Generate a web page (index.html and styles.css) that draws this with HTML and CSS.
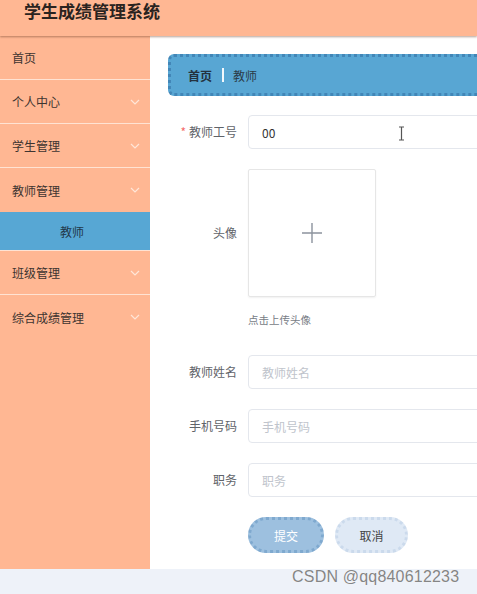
FILE: index.html
```html
<!DOCTYPE html>
<html lang="zh-CN">
<head>
<meta charset="utf-8">
<title>学生成绩管理系统</title>
<link rel="stylesheet" href="styles.css">
</head>
<body>
<div class="app">
  <header class="topbar"><h1 class="title">学生成绩管理系统</h1></header>
  <div class="layout">
    <aside class="sidebar">
      <div class="menu-item">首页</div>
      <div class="menu-item">个人中心<svg class="chev" width="10" height="6" viewBox="0 0 10 6"><polyline points="1,1 5,5 9,1" fill="none" stroke="#ffe6d8" stroke-width="1.2"/></svg></div>
      <div class="menu-item">学生管理<svg class="chev" width="10" height="6" viewBox="0 0 10 6"><polyline points="1,1 5,5 9,1" fill="none" stroke="#ffe6d8" stroke-width="1.2"/></svg></div>
      <div class="menu-group">
        <div class="menu-title">教师管理<svg class="chev" width="10" height="6" viewBox="0 0 10 6"><polyline points="1,1 5,5 9,1" fill="none" stroke="#ffe6d8" stroke-width="1.2"/></svg></div>
        <div class="menu-sub">教师</div>
      </div>
      <div class="menu-item">班级管理<svg class="chev" width="10" height="6" viewBox="0 0 10 6"><polyline points="1,1 5,5 9,1" fill="none" stroke="#ffe6d8" stroke-width="1.2"/></svg></div>
      <div class="menu-item last">综合成绩管理<svg class="chev" width="10" height="6" viewBox="0 0 10 6"><polyline points="1,1 5,5 9,1" fill="none" stroke="#ffe6d8" stroke-width="1.2"/></svg></div>
    </aside>
    <main class="main">
      <div class="breadcrumb">
        <span class="crumb-home">首页</span>
        <span class="crumb-sep"></span>
        <span class="crumb-cur">教师</span>
      </div>
      <form class="form">
        <div class="row first">
          <label class="label"><span class="req">*</span>教师工号</label>
          <div class="control">
            <input class="input" type="text" value="00">
            <svg class="ibeam" width="7" height="15" viewBox="0 0 7 15"><path d="M1 1h5M3.5 1v13M1 14h5" fill="none" stroke="#555" stroke-width="1.2"/></svg>
          </div>
        </div>
        <div class="row avatar-row">
          <label class="label tall">头像</label>
          <div class="upload-col">
            <div class="uploader">
              <svg width="22" height="22" viewBox="0 0 22 22"><path d="M11 1v20M1 11h20" stroke="#8c939d" stroke-width="1.4" fill="none"/></svg>
            </div>
            <div class="tip">点击上传头像</div>
          </div>
        </div>
        <div class="row">
          <label class="label">教师姓名</label>
          <div class="control"><input class="input" type="text" placeholder="教师姓名"></div>
        </div>
        <div class="row">
          <label class="label">手机号码</label>
          <div class="control"><input class="input" type="text" placeholder="手机号码"></div>
        </div>
        <div class="row">
          <label class="label">职务</label>
          <div class="control"><input class="input" type="text" placeholder="职务"></div>
        </div>
        <div class="actions">
          <button type="button" class="btn btn-primary">提交</button>
          <button type="button" class="btn btn-cancel">取消</button>
        </div>
      </form>
    </main>
  </div>
</div>
<div class="watermark">CSDN @qq840612233</div>
</body>
</html>
```
FILE: styles.css
```css
* { box-sizing: border-box; }
html, body { margin: 0; padding: 0; }
body {
  background: #eef2f9;
  font-family: "Noto Sans CJK SC", "Noto Sans", sans-serif;
  color: #333;
  width: 477px;
  height: 594px;
  overflow: hidden;
  position: relative;
}
.app {
  height: 569px;
  display: flex;
  flex-direction: column;
}
.topbar {
  height: 36px;
  flex: none;
  background: #ffb793;
  box-shadow: 0 1px 2px rgba(90, 50, 30, 0.45);
  position: relative;
  z-index: 2;
  padding: 0 0 0 24px;
}
.title {
  margin: 0;
  font-size: 17px;
  line-height: 22px;
  font-weight: bold;
  color: #2a2320;
}
.layout {
  flex: 1;
  display: flex;
  min-height: 0;
}
.sidebar {
  width: 150px;
  flex: none;
  background: #ffb793;
}
.menu-item, .menu-title {
  height: 44px;
  display: flex;
  align-items: center;
  justify-content: space-between;
  padding: 0 10px 0 12px;
  font-size: 12px;
  color: #3d3430;
}
.menu-item, .menu-group {
  border-bottom: 1px solid #ffe3d3;
}
.menu-item.last { border-bottom: none; }
.menu-sub {
  height: 38px;
  background: #57a7d4;
  display: flex;
  align-items: center;
  padding-left: 60px;
  font-size: 12px;
  color: #22384a;
}
.chev { display: block; }
.main {
  flex: 1;
  background: #fff;
  padding: 18px 0 0 18px;
  overflow: hidden;
  min-width: 0;
}
.breadcrumb {
  width: 360px;
  height: 42px;
  background: #58a6d3;
  border: 3px dotted #4286b7;
  border-radius: 6px;
  display: flex;
  align-items: center;
  padding-left: 17px;
  font-size: 12px;
}
.crumb-home { font-weight: bold; color: #24323f; }
.crumb-sep {
  width: 2px;
  height: 14px;
  background: #f3f8fc;
  margin: 0 9px 0 10px;
}
.crumb-cur { color: #2b3a46; }
.form {
  margin: 19px 0 0 -18px;
}
.row {
  display: flex;
  align-items: flex-start;
  margin-bottom: 20px;
}
.label {
  width: 98px;
  flex: none;
  padding-right: 11px;
  text-align: right;
  font-size: 12px;
  line-height: 34px;
  color: #5f6369;
}
.label.tall { line-height: 128px; }
.req { color: #f56c6c; margin-right: 3px; }
.control { position: relative; }
.input {
  display: block;
  width: 260px;
  height: 34px;
  border: 1px solid #e4e7ed;
  border-radius: 4px;
  padding: 0 13px;
  font-family: inherit;
  font-size: 12px;
  color: #333;
  background: #fff;
  outline: none;
}
.input::placeholder { color: #c0c4cc; }
.ibeam {
  position: absolute;
  left: 150px;
  top: 11px;
}
.avatar-row { margin-bottom: 27px; }
.uploader {
  width: 128px;
  height: 128px;
  border: 1px solid #e6e6e6;
  border-radius: 2px;
  box-shadow: 0 1px 2px rgba(0, 0, 0, 0.06);
  display: flex;
  align-items: center;
  justify-content: center;
}
.tip {
  margin-top: 15px;
  font-size: 10.5px;
  line-height: 16px;
  color: #777c85;
}
.actions {
  display: flex;
  gap: 11px;
  padding-left: 98px;
  margin-top: 20px;
}
.btn {
  height: 36px;
  border-radius: 18px;
  font-family: inherit;
  font-size: 12px;
  padding: 0;
  cursor: pointer;
}
.btn-primary {
  width: 76px;
  background: #9dc0df;
  border: 3px dotted #7fa9cf;
  color: #fff;
}
.btn-cancel {
  width: 73px;
  background: #dfe9f5;
  border: 3px dotted #cbdaec;
  color: #444;
}
.watermark {
  position: absolute;
  left: 292px;
  top: 567px;
  font-family: "Liberation Sans", Arial, sans-serif;
  font-size: 16px;
  line-height: 20px;
  color: #858585;
  text-shadow: 0 0 1px #fff;
  letter-spacing: 0.2px;
}
```
